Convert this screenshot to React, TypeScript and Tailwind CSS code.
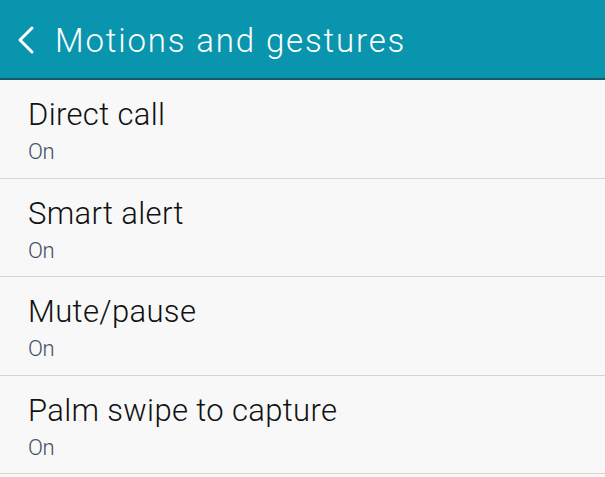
import React from "react";

const items = ["Direct call", "Smart alert", "Mute/pause", "Palm swipe to capture"];

export default function App() {
  return (
    <div className="w-[605px] h-[477px] overflow-hidden bg-[#f8f8f8]" style={{ fontFamily: "Roboto, 'Noto Sans', sans-serif" }}>
      <div className="h-[80px] bg-[#0995ad] border-b-2 border-[#17586a] flex items-center">
        <svg width="22" height="30" viewBox="0 0 22 30" className="ml-[15px] mt-[2px]" fill="none">
          <path d="M17 3 L5 15 L17 27" stroke="#ffffff" strokeWidth="3" strokeLinecap="round" strokeLinejoin="round" />
        </svg>
        <span className="ml-[18px] mt-[2px] text-[33px] font-light text-white tracking-[1.85px] leading-none">Motions and gestures</span>
      </div>
      {items.map((t) => (
        <div key={t} className="h-[98.5px] border-b-[1.5px] border-[#d5d5d5] pl-[28px] pt-[16px]">
          <div className="text-[31px] font-light text-[#111111] leading-[38px] tracking-[0.35px]">{t}</div>
          <div className="text-[22px] font-light text-[#3f5066] leading-[26px] mt-[5px] tracking-[-0.3px]">On</div>
        </div>
      ))}
    </div>
  );
}
